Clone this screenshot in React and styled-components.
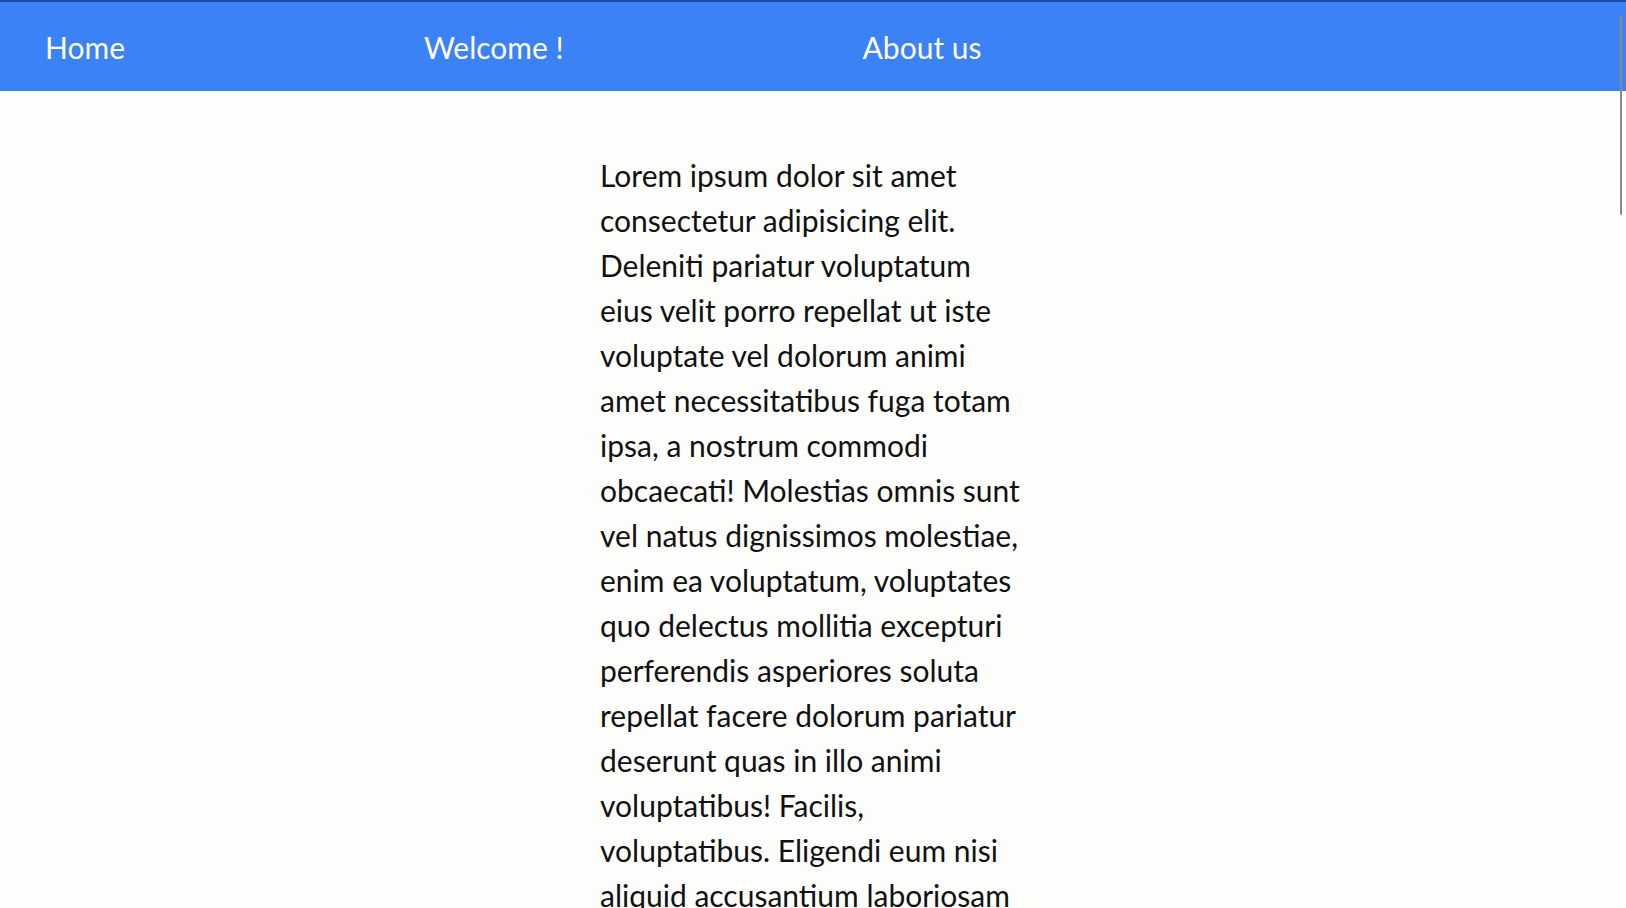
import React from 'react';
import styled, { createGlobalStyle } from 'styled-components';

const GlobalStyle = createGlobalStyle`
  html {
    scrollbar-width: none;
  }
  body {
    margin: 0;
    background: #fdfdfc;
    color: #111;
    font-family: Lato, "Noto Sans", sans-serif;
  }
`;

const Navbar = styled.nav`
  box-sizing: border-box;
  height: 91px;
  display: flex;
  align-items: center;
  gap: 299px;
  padding: 1px 0 0 45px;
  background: #3b82f6;
  border-top: 2px solid #1e46ac;
`;

const NavLink = styled.a`
  color: #fff;
  font-size: 30px;
  text-decoration: none;
  cursor: pointer;
`;

const Content = styled.main`
  max-width: 426px;
  margin: 0 auto;
  padding-top: 62px;
`;

const Text = styled.p`
  margin: 0;
  font-size: 30px;
  line-height: 45px;
`;

const ScrollThumb = styled.div`
  position: fixed;
  top: 16px;
  right: 4px;
  width: 2px;
  height: 199px;
  border-radius: 1px;
  background: #8a8a8a;
`;

const LOREM =
  'Lorem ipsum dolor sit amet consectetur adipisicing elit. Deleniti pariatur voluptatum eius velit porro repellat ut iste voluptate vel dolorum animi amet necessitatibus fuga totam ipsa, a nostrum commodi obcaecati! Molestias omnis sunt vel natus dignissimos molestiae, enim ea voluptatum, voluptates quo delectus mollitia excepturi perferendis asperiores soluta repellat facere dolorum pariatur deserunt quas in illo animi voluptatibus! Facilis, voluptatibus. Eligendi eum nisi aliquid accusantium laboriosam dolore quisquam ipsam, tempora sint nobis itaque consequatur at quae. Neque, quasi.';

export default function App() {
  return (
    <>
      <GlobalStyle />
      <Navbar>
        <NavLink href="#">Home</NavLink>
        <NavLink href="#">Welcome !</NavLink>
        <NavLink href="#">About us</NavLink>
      </Navbar>
      <Content>
        <Text>{LOREM}</Text>
        <Text>{LOREM}</Text>
      </Content>
      <ScrollThumb />
    </>
  );
}
